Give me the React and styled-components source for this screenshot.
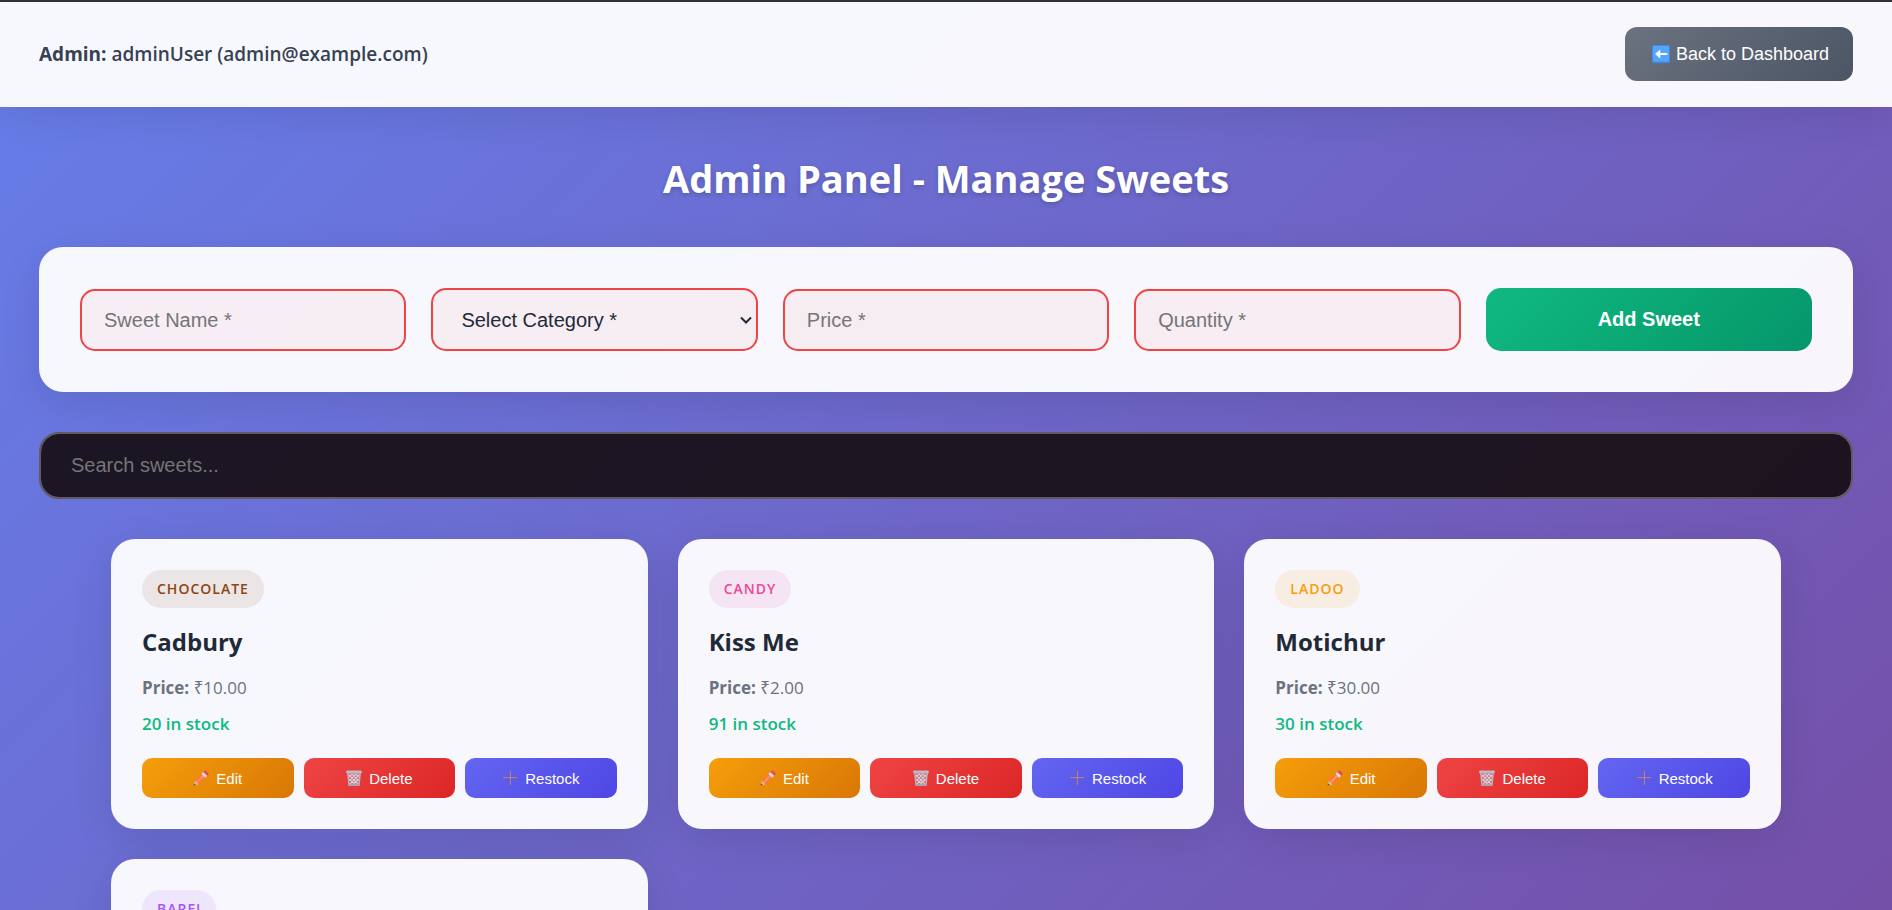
import React, { useState } from "react";
import styled, { createGlobalStyle } from "styled-components";

const GlobalStyle = createGlobalStyle`
  *, *::before, *::after { box-sizing: border-box; }
  body {
    margin: 0;
    color: #1f2937;
    font-family: "Segoe UI", "Open Sans", "Noto Sans", sans-serif;
  }
  strong { font-weight: 700; }
`;

const controlFont = `"Liberation Sans", Arial, sans-serif`;

const Page = styled.div`
  min-height: 100vh;
  border-top: 2px solid #343338;
  background: linear-gradient(135deg, #667eea 0%, #764ba2 100%);
`;

const Header = styled.header`
  display: flex;
  align-items: center;
  justify-content: space-between;
  padding: 25px 39px 26px;
  background: rgba(255, 255, 255, 0.95);
  box-shadow: 0 8px 40px rgba(0, 0, 0, 0.1);
`;

const UserInfo = styled.div`
  color: #374151;
  font-size: 19px;
  font-weight: 600;
  line-height: 28px;
`;

const BackButton = styled.button`
  display: flex;
  align-items: center;
  gap: 6px;
  height: 54px;
  padding: 0 24px 0 27px;
  border: 0;
  border-radius: 12px;
  background: linear-gradient(135deg, #6b7280, #4b5563);
  color: #fff;
  font-family: ${controlFont};
  font-size: 18px;
  font-weight: 400;
  cursor: pointer;
`;

const Main = styled.main`
  padding: 44px 39px 39px;
`;

const Title = styled.h1`
  margin: 0 0 42px;
  color: #fff;
  font-size: 38px;
  font-weight: 700;
  line-height: 54px;
  text-align: center;
  text-shadow: 0 2px 5px rgba(0, 0, 0, 0.2);
`;

const Form = styled.form`
  display: grid;
  grid-template-columns: repeat(5, minmax(0, 1fr));
  align-items: end;
  gap: 25px;
  margin-bottom: 40px;
  padding: 41px;
  border-radius: 24px;
  background: rgba(255, 255, 255, 0.95);
  box-shadow: 0 10px 40px rgba(0, 0, 0, 0.1);
`;

const Field = styled.input`
  width: 100%;
  height: 62px;
  padding: 0 22px;
  border: 2px solid #ef4444;
  border-radius: 15px;
  outline: 0;
  background: rgba(239, 68, 68, 0.05);
  color: #1f2937;
  font-family: ${controlFont};
  font-size: 20px;
  &::placeholder { color: #757575; opacity: 1; }
`;

const SelectWrap = styled.div`
  position: relative;
  display: flex;

  svg {
    position: absolute;
    top: 28px;
    right: 5px;
    pointer-events: none;
  }
`;

const Select = styled(Field).attrs({ as: "select" })`
  height: 63px;
  padding: 0 28px;
  appearance: none;
`;

const AddButton = styled.button`
  height: 63px;
  border: 0;
  border-radius: 15px;
  background: linear-gradient(135deg, #10b981, #059669);
  color: #fff;
  font-family: ${controlFont};
  font-size: 20px;
  font-weight: 700;
  cursor: pointer;
`;

const Search = styled.input`
  display: block;
  width: 100%;
  height: 67px;
  margin-bottom: 40px;
  padding: 0 30px;
  border: 2px solid #615a61;
  border-radius: 20px;
  outline: 0;
  background: rgba(20, 12, 16, 0.9);
  background-clip: padding-box;
  color: #fff;
  font-family: ${controlFont};
  font-size: 20px;
  &::placeholder { color: #757575; opacity: 1; }
`;

const Grid = styled.section`
  display: grid;
  grid-template-columns: repeat(auto-fill, minmax(400px, 1fr));
  gap: 30px;
  max-width: 1670px;
  margin: 0 auto;
`;

const Card = styled.article`
  padding: 31px;
  border-radius: 24px;
  background: rgba(255, 255, 255, 0.95);
  box-shadow: 0 10px 40px rgba(0, 0, 0, 0.1);
`;

const Tag = styled.span`
  display: block;
  width: fit-content;
  padding: 9px 15px;
  border-radius: 25px;
  background: ${(p) => p.$tint};
  color: ${(p) => p.$color};
  font-size: 14px;
  font-weight: 600;
  line-height: 20px;
  letter-spacing: 1px;
  text-transform: uppercase;
`;

const Name = styled.h2`
  margin: 17px 0;
  color: #1f2937;
  font-size: 24px;
  font-weight: 700;
  line-height: 34px;
`;

const Price = styled.p`
  margin: 0 0 12px;
  color: #6b7280;
  font-size: 17px;
  font-weight: 400;
  line-height: 24px;
`;

const Stock = styled.p`
  margin: 0 0 22px;
  color: #10b981;
  font-size: 17px;
  font-weight: 600;
  line-height: 24px;
`;

const Actions = styled.div`
  display: grid;
  grid-template-columns: repeat(3, 1fr);
  gap: 10px;
`;

const ActionButton = styled.button`
  display: flex;
  align-items: center;
  justify-content: center;
  gap: 7px;
  height: 40px;
  padding: 0;
  border: 0;
  border-radius: 10px;
  background: linear-gradient(135deg, ${(p) => p.$from}, ${(p) => p.$to});
  color: #fff;
  font-family: ${controlFont};
  font-size: 15px;
  cursor: pointer;
`;

const ChevronIcon = () => (
  <svg width="14" height="9" viewBox="0 0 14 9" aria-hidden="true">
    <path d="M2 1.5L7 6.5L12 1.5" fill="none" stroke="#1f2937" strokeWidth="2" />
  </svg>
);

const BackIcon = () => (
  <svg width="18" height="18" viewBox="0 0 18 18" aria-hidden="true">
    <rect width="18" height="18" rx="1.5" fill="#3f8ae8" />
    <rect x="1" y="1" width="16" height="15.5" rx="1" fill="#55a5fb" />
    <path d="M14.5 9H6" fill="none" stroke="#fff" strokeWidth="2" strokeLinecap="round" />
    <path d="M3.5 9L8 5V13Z" fill="#fff" stroke="#fff" strokeWidth=".6" strokeLinejoin="round" />
  </svg>
);

const PencilIcon = () => (
  <svg width="16" height="16" viewBox="0 0 16 16" aria-hidden="true">
    <path d="M.5 15.5L2 10.4L5.8 14.2Z" fill="#dfb799" />
    <path d="M.5 15.5L1.1 13.4L2.7 15Z" fill="#51404a" />
    <path d="M2 10.4L8.4 4L12.2 7.8L5.8 14.2Z" fill="#ff7440" />
    <path d="M3.2 11.6L9.6 5.2L11 6.6L4.6 13Z" fill="#ff955c" />
    <path d="M8.4 4L10.4 2L14.2 5.8L12.2 7.8Z" fill="#d9deea" />
    <path d="M10.4 2L11.6 .8Q12.4 .2 13.2 .8L15.3 2.9Q16 3.8 15.4 4.6L14.2 5.8Z" fill="#f3435c" />
  </svg>
);

const TrashIcon = () => (
  <svg width="16" height="16" viewBox="0 0 16 16" aria-hidden="true">
    <path d="M1.8 3L3 15H13L14.2 3" fill="#d0606c" stroke="#b9b4c0" strokeWidth="1.5" />
    <path d="M3 5L12 14M6 4L12.5 10.5M10 4L13 7M3.5 9L8.5 14M13 5L4 14M10 4L3.5 10.5M6 4L3 7M12.5 9L7.5 14" stroke="#d9d3dc" strokeWidth="1.1" />
    <path d="M3 14.7H13" stroke="#aaa4b2" strokeWidth="1.8" />
    <rect x=".3" y=".6" width="15.4" height="2.8" rx=".7" fill="#bdb9c6" />
  </svg>
);

const PlusIcon = () => (
  <svg width="16" height="16" viewBox="0 0 16 16" aria-hidden="true">
    <path d="M8 1V15M1 8H15" stroke="#7a5aa4" strokeWidth="2.4" strokeLinecap="round" />
    <path d="M8.4 1.5V14.5M1.5 7.6H14.5" stroke="#a088c0" strokeWidth="1" strokeLinecap="round" />
  </svg>
);

const categories = {
  Chocolate: { color: "#8b4513", tint: "rgba(139, 69, 19, 0.1)" },
  Candy: { color: "#ec4899", tint: "rgba(236, 72, 153, 0.1)" },
  Ladoo: { color: "#f59e0b", tint: "rgba(245, 158, 11, 0.1)" },
  Barfi: { color: "#a855f7", tint: "rgba(168, 85, 247, 0.1)" },
};

const sweets = [
  { name: "Cadbury", category: "Chocolate", price: "10.00", stock: 20 },
  { name: "Kiss Me", category: "Candy", price: "2.00", stock: 91 },
  { name: "Motichur", category: "Ladoo", price: "30.00", stock: 30 },
  { name: "Kaju", category: "Barfi", price: "20.00", stock: 40 },
];

function SweetCard({ sweet }) {
  const { color, tint } = categories[sweet.category];
  return (
    <Card>
      <Tag $color={color} $tint={tint}>{sweet.category}</Tag>
      <Name>{sweet.name}</Name>
      <Price><strong>Price:</strong> ₹{sweet.price}</Price>
      <Stock>{sweet.stock} in stock</Stock>
      <Actions>
        <ActionButton type="button" $from="#f59e0b" $to="#d97706"><PencilIcon />Edit</ActionButton>
        <ActionButton type="button" $from="#ef4444" $to="#dc2626"><TrashIcon />Delete</ActionButton>
        <ActionButton type="button" $from="#6366f1" $to="#4f46e5"><PlusIcon />Restock</ActionButton>
      </Actions>
    </Card>
  );
}

export default function App() {
  const [query, setQuery] = useState("");
  const shown = sweets.filter((s) => s.name.toLowerCase().includes(query.toLowerCase()));
  return (
    <>
      <GlobalStyle />
      <Page>
        <Header>
          <UserInfo><strong>Admin:</strong> adminUser (admin@example.com)</UserInfo>
          <BackButton type="button"><BackIcon />Back to Dashboard</BackButton>
        </Header>
        <Main>
          <Title>Admin Panel - Manage Sweets</Title>
          <Form onSubmit={(e) => e.preventDefault()}>
            <Field type="text" placeholder="Sweet Name *" aria-label="Sweet name" />
            <SelectWrap>
              <Select aria-label="Category" defaultValue="">
                <option value="">Select Category *</option>
                {Object.keys(categories).map((c) => <option key={c}>{c}</option>)}
              </Select>
              <ChevronIcon />
            </SelectWrap>
            <Field type="number" placeholder="Price *" aria-label="Price" />
            <Field type="number" placeholder="Quantity *" aria-label="Quantity" />
            <AddButton type="submit">Add Sweet</AddButton>
          </Form>
          <Search
            type="text"
            placeholder="Search sweets..."
            aria-label="Search sweets"
            value={query}
            onChange={(e) => setQuery(e.target.value)}
          />
          <Grid>
            {shown.map((s) => <SweetCard key={s.name} sweet={s} />)}
          </Grid>
        </Main>
      </Page>
    </>
  );
}
